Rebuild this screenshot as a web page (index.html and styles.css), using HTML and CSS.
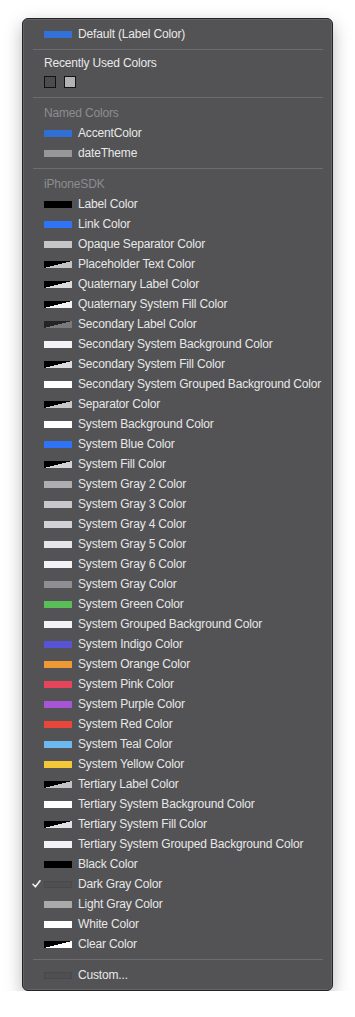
FILE: index.html
```html
<!DOCTYPE html>
<html>
<head>
<meta charset="utf-8">
<link rel="stylesheet" href="styles.css">
</head>
<body>
<div class="menu">
  <div class="item"><span class="check"></span><span class="sw" style="background:#3271d8"></span><span class="label">Default (Label Color)</span></div>
  <div class="sep sep-tight"></div>
  <div class="recent">
    <div class="recent-title">Recently Used Colors</div>
    <div class="recent-boxes"><span class="box box-dark"></span><span class="box box-light"></span></div>
  </div>
  <div class="sep"></div>
  <div class="header">Named Colors</div>
  <div class="item"><span class="check"></span><span class="sw" style="background:#306fd6"></span><span class="label">AccentColor</span></div>
  <div class="item"><span class="check"></span><span class="sw" style="background:#979797"></span><span class="label">dateTheme</span></div>
  <div class="sep"></div>
  <div class="header">iPhoneSDK</div>
  <div class="item"><span class="check"></span><span class="sw" style="background:#000"></span><span class="label">Label Color</span></div>
  <div class="item"><span class="check"></span><span class="sw" style="background:#2f73f6"></span><span class="label">Link Color</span></div>
  <div class="item"><span class="check"></span><span class="sw" style="background:#c6c6c8"></span><span class="label">Opaque Separator Color</span></div>
  <div class="item"><span class="check"></span><span class="sw split" style="--c:#c4c4c6"></span><span class="label">Placeholder Text Color</span></div>
  <div class="item"><span class="check"></span><span class="sw split" style="--c:#dcdcde"></span><span class="label">Quaternary Label Color</span></div>
  <div class="item"><span class="check"></span><span class="sw split" style="--c:#f4f4f6"></span><span class="label">Quaternary System Fill Color</span></div>
  <div class="item"><span class="check"></span><span class="sw split" style="--c:#7a7a7d;--d:#242426"></span><span class="label">Secondary Label Color</span></div>
  <div class="item"><span class="check"></span><span class="sw" style="background:#f2f2f7"></span><span class="label">Secondary System Background Color</span></div>
  <div class="item"><span class="check"></span><span class="sw split" style="--c:#dcdce0"></span><span class="label">Secondary System Fill Color</span></div>
  <div class="item"><span class="check"></span><span class="sw" style="background:#fff"></span><span class="label">Secondary System Grouped Background Color</span></div>
  <div class="item"><span class="check"></span><span class="sw split" style="--c:#c8c8ca"></span><span class="label">Separator Color</span></div>
  <div class="item"><span class="check"></span><span class="sw" style="background:#fff"></span><span class="label">System Background Color</span></div>
  <div class="item"><span class="check"></span><span class="sw" style="background:#2f73f6"></span><span class="label">System Blue Color</span></div>
  <div class="item"><span class="check"></span><span class="sw split" style="--c:#d4d4d8"></span><span class="label">System Fill Color</span></div>
  <div class="item"><span class="check"></span><span class="sw" style="background:#aeaeb2"></span><span class="label">System Gray 2 Color</span></div>
  <div class="item"><span class="check"></span><span class="sw" style="background:#c7c7cc"></span><span class="label">System Gray 3 Color</span></div>
  <div class="item"><span class="check"></span><span class="sw" style="background:#d1d1d6"></span><span class="label">System Gray 4 Color</span></div>
  <div class="item"><span class="check"></span><span class="sw" style="background:#e5e5ea"></span><span class="label">System Gray 5 Color</span></div>
  <div class="item"><span class="check"></span><span class="sw" style="background:#f2f2f7"></span><span class="label">System Gray 6 Color</span></div>
  <div class="item"><span class="check"></span><span class="sw" style="background:#8e8e93"></span><span class="label">System Gray Color</span></div>
  <div class="item"><span class="check"></span><span class="sw" style="background:#5bbd58"></span><span class="label">System Green Color</span></div>
  <div class="item"><span class="check"></span><span class="sw" style="background:#f2f2f7"></span><span class="label">System Grouped Background Color</span></div>
  <div class="item"><span class="check"></span><span class="sw" style="background:#5753d4"></span><span class="label">System Indigo Color</span></div>
  <div class="item"><span class="check"></span><span class="sw" style="background:#ef9934"></span><span class="label">System Orange Color</span></div>
  <div class="item"><span class="check"></span><span class="sw" style="background:#e6445a"></span><span class="label">System Pink Color</span></div>
  <div class="item"><span class="check"></span><span class="sw" style="background:#a655d4"></span><span class="label">System Purple Color</span></div>
  <div class="item"><span class="check"></span><span class="sw" style="background:#e8463b"></span><span class="label">System Red Color</span></div>
  <div class="item"><span class="check"></span><span class="sw" style="background:#6cb9ef"></span><span class="label">System Teal Color</span></div>
  <div class="item"><span class="check"></span><span class="sw" style="background:#f4c739"></span><span class="label">System Yellow Color</span></div>
  <div class="item"><span class="check"></span><span class="sw split" style="--c:#c4c4c6"></span><span class="label">Tertiary Label Color</span></div>
  <div class="item"><span class="check"></span><span class="sw" style="background:#fff"></span><span class="label">Tertiary System Background Color</span></div>
  <div class="item"><span class="check"></span><span class="sw split" style="--c:#e2e2e6"></span><span class="label">Tertiary System Fill Color</span></div>
  <div class="item"><span class="check"></span><span class="sw" style="background:#f2f2f7"></span><span class="label">Tertiary System Grouped Background Color</span></div>
  <div class="item"><span class="check"></span><span class="sw" style="background:#000"></span><span class="label">Black Color</span></div>
  <div class="item"><span class="check"><svg width="9" height="8" viewBox="0 0 9 8"><path d="M1 4.3 L3.4 6.8 L8 0.8" fill="none" stroke="#f0f0f0" stroke-width="1.6" stroke-linecap="round" stroke-linejoin="round"/></svg></span><span class="sw sw-dim"></span><span class="label">Dark Gray Color</span></div>
  <div class="item"><span class="check"></span><span class="sw" style="background:#aaaaaa"></span><span class="label">Light Gray Color</span></div>
  <div class="item"><span class="check"></span><span class="sw" style="background:#fff"></span><span class="label">White Color</span></div>
  <div class="item"><span class="check"></span><span class="sw split" style="--c:#fff"></span><span class="label">Clear Color</span></div>
  <div class="sep"></div>
  <div class="item"><span class="check"></span><span class="sw sw-dim"></span><span class="label">Custom...</span></div>
</div>
</body>
</html>
```

FILE: styles.css
```css
html, body {
  margin: 0;
  padding: 0;
  background: #ffffff;
}

body {
  font-family: "Liberation Sans", Arial, sans-serif;
  font-size: 12px;
  letter-spacing: -0.17px;
}

.menu {
  margin: 18px 0 0 22px;
  width: 311px;
  box-sizing: border-box;
  background: #535355;
  border: 1px solid #242426;
  border-radius: 6px;
  box-shadow: inset 0 0 0 1px #646466, 0 6px 18px rgba(0, 0, 0, 0.28);
  padding: 5px 0 5px 0;
  color: #e8e8e8;
}

.item {
  display: flex;
  align-items: center;
  height: 20px;
  padding-left: 9px;
}

.check {
  width: 12px;
  display: flex;
  align-items: center;
}

.sw {
  width: 28px;
  height: 7px;
  flex: none;
  box-sizing: border-box;
  margin-right: 6px;
}

.split {
  background: linear-gradient(to bottom right, var(--d, #000) 50%, var(--c) 50%);
}

.sw-dim {
  background: #4f4f51;
  border: 1px solid #49494b;
}

.label {
  white-space: nowrap;
  line-height: 20px;
}

.sep {
  height: 1px;
  background: #6c6c6e;
  margin: 5px 9px 5px 10px;
}

.sep-tight {
  margin-bottom: 4px;
}

.recent {
  padding: 0 0 4px 21px;
}

.recent-title {
  line-height: 18px;
  height: 18px;
}

.recent-boxes {
  display: flex;
  gap: 8px;
  margin-top: 4px;
}

.box {
  width: 12px;
  height: 12px;
  box-sizing: border-box;
  border: 1px solid #121212;
}

.box-dark {
  background: #4c4c4e;
}

.box-light {
  background: #b2b2b2;
}

.header {
  height: 20px;
  line-height: 20px;
  padding-left: 21px;
  color: #8d8d8f;
}
```
